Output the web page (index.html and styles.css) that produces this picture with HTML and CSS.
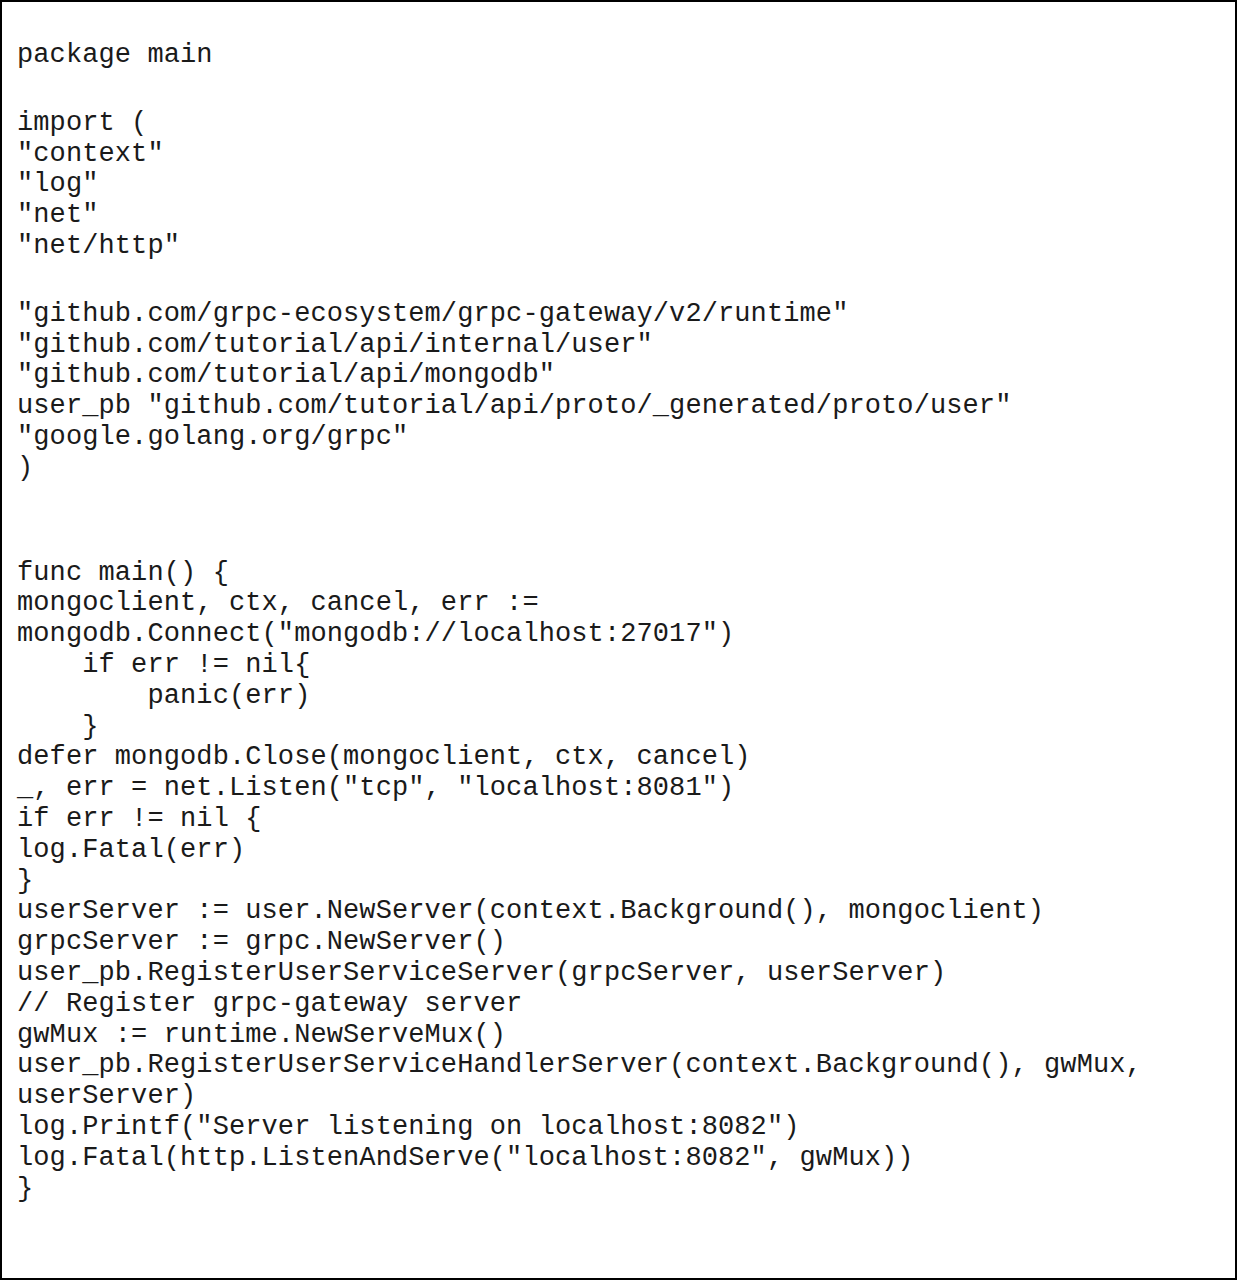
FILE: index.html
```html
<!DOCTYPE html>
<html>
<head>
<meta charset="utf-8">
<link rel="stylesheet" href="styles.css">
</head>
<body>
<div class="page">
<div class="code">
<div class="ln">package main</div>
<div class="blank"></div>
<div class="ln">import (</div>
<div class="ln">"context"</div>
<div class="ln">"log"</div>
<div class="ln">"net"</div>
<div class="ln">"net/http"</div>
<div class="blank"></div>
<div class="ln">"github.com/grpc-ecosystem/grpc-gateway/v2/runtime"</div>
<div class="ln">"github.com/tutorial/api/internal/user"</div>
<div class="ln">"github.com/tutorial/api/mongodb"</div>
<div class="ln">user_pb "github.com/tutorial/api/proto/_generated/proto/user"</div>
<div class="ln">"google.golang.org/grpc"</div>
<div class="ln">)</div>
<div class="blank"></div>
<div class="blank"></div>
<div class="ln">func main() {</div>
<div class="ln">mongoclient, ctx, cancel, err :=</div>
<div class="ln">mongodb.Connect("mongodb://localhost:27017")</div>
<div class="ln">    if err != nil{</div>
<div class="ln">        panic(err)</div>
<div class="ln">    }</div>
<div class="ln">defer mongodb.Close(mongoclient, ctx, cancel)</div>
<div class="ln">_, err = net.Listen("tcp", "localhost:8081")</div>
<div class="ln">if err != nil {</div>
<div class="ln">log.Fatal(err)</div>
<div class="ln">}</div>
<div class="ln">userServer := user.NewServer(context.Background(), mongoclient)</div>
<div class="ln">grpcServer := grpc.NewServer()</div>
<div class="ln">user_pb.RegisterUserServiceServer(grpcServer, userServer)</div>
<div class="ln">// Register grpc-gateway server</div>
<div class="ln">gwMux := runtime.NewServeMux()</div>
<div class="ln">user_pb.RegisterUserServiceHandlerServer(context.Background(), gwMux,</div>
<div class="ln">userServer)</div>
<div class="ln">log.Printf("Server listening on localhost:8082")</div>
<div class="ln">log.Fatal(http.ListenAndServe("localhost:8082", gwMux))</div>
<div class="ln">}</div>
</div>
</div>
</body>
</html>
```
FILE: styles.css
```css
html, body {
  margin: 0;
  padding: 0;
  background: #fff;
}
.page {
  box-sizing: border-box;
  width: 1237px;
  height: 1280px;
  border: 2px solid #000;
  padding: 38px 0 0 15px;
  background: #fff;
}
.code {
  font-family: "Liberation Mono", "Courier New", monospace;
  font-size: 27px;
  letter-spacing: 0.1px;
  color: #1a1a1a;
}
.ln {
  white-space: pre;
  line-height: 30.8px;
  height: 30.8px;
}
.blank {
  height: 37px;
}
```
